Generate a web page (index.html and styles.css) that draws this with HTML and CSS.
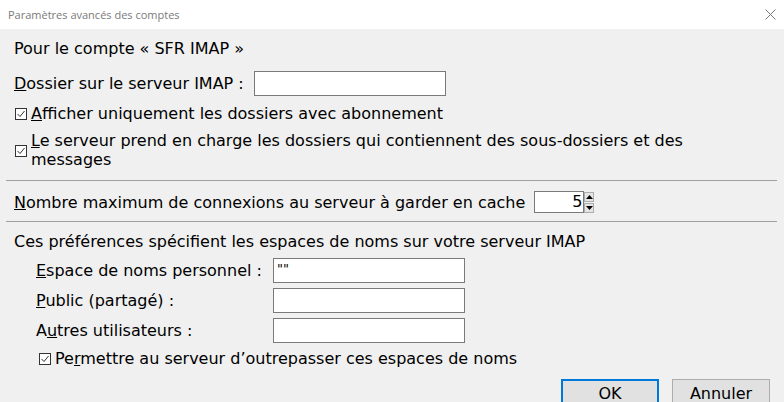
FILE: index.html
```html
<!DOCTYPE html>
<html lang="fr">
<head>
<meta charset="utf-8">
<title>Paramètres avancés des comptes</title>
<link rel="stylesheet" href="styles.css">
</head>
<body>
<div class="window">
  <div class="titlebar">
    <span class="title">Paramètres avancés des comptes</span>
    <svg class="close" width="11" height="11" viewBox="0 0 11 11"><path d="M0.5 0.5L10.5 10.5M10.5 0.5L0.5 10.5" stroke="#777" stroke-width="1"/></svg>
  </div>
  <div class="content">
    <div class="line account">Pour le compte « SFR IMAP »</div>
    <div class="dir-row">
      <span><u>D</u>ossier sur le serveur IMAP :</span>
      <span class="field dir-field"></span>
    </div>
    <div class="check-row one">
      <svg class="cb" width="13" height="13" viewBox="0 0 13 13"><rect x="1.5" y="1.5" width="11" height="11" fill="#fff" stroke="#333"/><path d="M3.5 7L6 9.5L10.5 4" fill="none" stroke="#333" stroke-width="1"/></svg>
      <span><u>A</u>fficher uniquement les dossiers avec abonnement</span>
    </div>
    <div class="check-row two">
      <svg class="cb" width="13" height="13" viewBox="0 0 13 13"><rect x="1.5" y="1.5" width="11" height="11" fill="#fff" stroke="#333"/><path d="M3.5 7L6 9.5L10.5 4" fill="none" stroke="#333" stroke-width="1"/></svg>
      <span class="wrap"><u>L</u>e serveur prend en charge les dossiers qui contiennent des sous-dossiers et des messages</span>
    </div>
    <hr class="sep sep1">
    <div class="max-row">
      <span><u>N</u>ombre maximum de connexions au serveur à garder en cache</span>
      <span class="spin">
        <span class="field spin-field">5</span>
        <span class="spin-btns">
          <span class="sb"><svg width="7" height="4" viewBox="0 0 7 4"><path d="M3.5 0L7 4H0z" fill="#000"/></svg></span>
          <span class="sb"><svg width="7" height="4" viewBox="0 0 7 4"><path d="M0 0H7L3.5 4z" fill="#000"/></svg></span>
        </span>
      </span>
    </div>
    <hr class="sep sep2">
    <div class="line prefs">Ces préférences spécifient les espaces de noms sur votre serveur IMAP</div>
    <div class="ns-grid">
      <span><u>E</u>space de noms personnel :</span><span class="field ns-field">""</span>
      <span><u>P</u>ublic (partagé) :</span><span class="field ns-field"></span>
      <span>A<u>u</u>tres utilisateurs :</span><span class="field ns-field"></span>
    </div>
    <div class="check-row three">
      <svg class="cb" width="13" height="13" viewBox="0 0 13 13"><rect x="1.5" y="1.5" width="11" height="11" fill="#fff" stroke="#333"/><path d="M3.5 7L6 9.5L10.5 4" fill="none" stroke="#333" stroke-width="1"/></svg>
      <span>Pe<u>r</u>mettre au serveur d’outrepasser ces espaces de noms</span>
    </div>
    <div class="buttons">
      <span class="btn ok">OK</span>
      <span class="btn">Annuler</span>
    </div>
  </div>
</div>
</body>
</html>
```
FILE: styles.css
```css
html, body {
  margin: 0;
  padding: 0;
  width: 784px;
  height: 402px;
  overflow: hidden;
  background: #f0f0f0;
}
.window {
  width: 784px;
  height: 402px;
  font-family: "DejaVu Sans", Verdana, sans-serif;
  font-size: 16px;
  color: #000;
}
.titlebar {
  height: 29px;
  background: #fff;
  display: flex;
  align-items: center;
  justify-content: space-between;
  padding: 0 8px 0 8px;
}
.title {
  font-family: "Open Sans", "Liberation Sans", sans-serif;
  font-size: 11px;
  color: #7a7a7a;
}
.content {
  padding: 0 7px 0 14px;
}
.line { line-height: 19px; }
.account { margin-top: 10px; }
.dir-row {
  display: flex;
  align-items: center;
  gap: 10px;
  height: 25px;
  margin-top: 13px;
}
.field {
  display: inline-block;
  box-sizing: border-box;
  background: #fff;
  border: 1px solid #7a7a7a;
  height: 25px;
}
.dir-field { width: 192px; }
.check-row {
  display: flex;
  align-items: center;
  gap: 4px;
  line-height: 19px;
}
.check-row.one { margin-top: 8px; }
.check-row.two { margin-top: 8px; }
.wrap { width: 690px; }
.cb { flex: none; }
.sep {
  border: 0;
  border-top: 1px solid #a0a0a0;
  margin: 11px 0 0 -8px;
  height: 0;
}
.max-row {
  display: flex;
  align-items: center;
  gap: 9px;
  height: 22px;
  margin-top: 10px;
}
.spin { display: flex; align-items: center; }
.spin-field {
  width: 50px;
  height: 22px;
  text-align: right;
  padding-right: 1px;
  line-height: 20px;
}
.spin-btns {
  display: flex;
  flex-direction: column;
  gap: 1px;
}
.sb {
  width: 10px;
  height: 10px;
  box-sizing: border-box;
  border: 1px solid #adadad;
  background: #e5e5e5;
  display: flex;
  align-items: center;
  justify-content: center;
}
.sep2 { margin-top: 8px; }
.prefs { margin-top: 10px; }
.ns-grid {
  display: grid;
  grid-template-columns: 237px 192px;
  row-gap: 5px;
  align-items: center;
  margin: 7px 0 0 22px;
}
.ns-field { padding-left: 3px; line-height: 20px; font-size: 13px; }
.check-row.three { margin: 6px 0 0 24px; }
.buttons {
  display: flex;
  justify-content: flex-end;
  gap: 13px;
  margin-top: 11px;
  padding-right: 7px;
}
.btn {
  box-sizing: border-box;
  width: 98px;
  height: 30px;
  background: #e1e1e1;
  border: 1px solid #adadad;
  text-align: center;
  line-height: 28px;
}
.btn.ok {
  border: 2px solid #0078d7;
  line-height: 26px;
}
```
